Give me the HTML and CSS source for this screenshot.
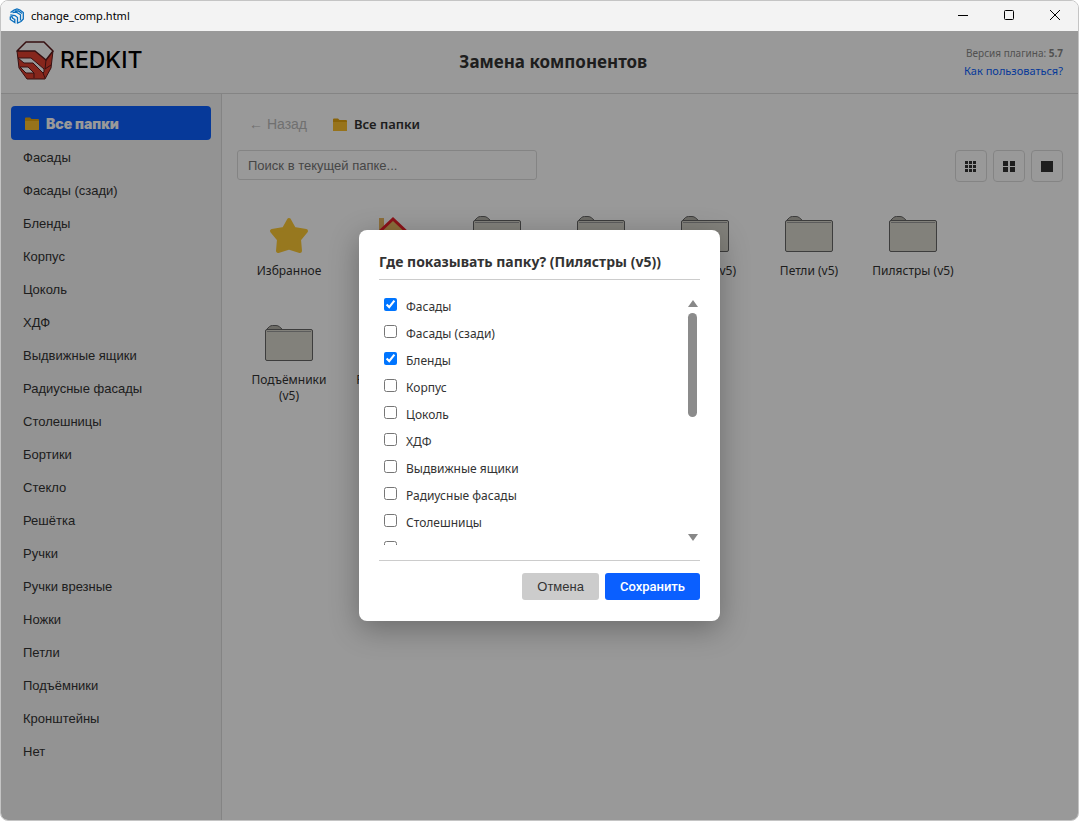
FILE: index.html
```
<!DOCTYPE html>
<html lang="ru">
<head>
  <meta charset="utf-8"/>
  <title>change_comp.html</title>
  <link rel="stylesheet" href="styles.css">
</head>
<body>
  <!-- Shared icons -->
  <svg class="sprite" aria-hidden="true">
    <symbol id="icoFolder" viewBox="0 0 50 38">
      <path d="M2.500 4.500 L5.500 1.500 Q7 .5 8.500 .5 H12 Q14 .5 15.500 1.800 L18.500 4.500Z" fill="#b5b3aa" stroke="#666" />
      <rect x="1.500" y="4.500" width="47" height="31" rx="1.500" fill="#d9d7ce" stroke="#666"/>
      <path d="M3 6.500 H47" stroke="#999"/>
    </symbol>
    <symbol id="icoTab" viewBox="0 0 14 13">
      <path d="M0 1.500 Q0 .5 1 .5 H5 L6.500 2 H13 Q14 2 14 3 V12 Q14 13 13 13 H1 Q0 13 0 12Z" fill="#e5a50f"/>
      <path d="M0 4 H14 V12 Q14 13 13 13 H1 Q0 13 0 12Z" fill="#fcc02e"/>
    </symbol>
  </svg>

  <div class="window">
    <div class="titlebar">
      <svg class="app-icon" viewBox="0 0 16 16" fill="none" stroke="#0b6fbd" stroke-width="1.300">
        <path d="M1.500 4.500 L5 2.200 L8 1 L11 2 L14.300 4.500 V11 L12 13.500 L8.500 15 V9.500 L6 7.500 L1.300 6.800"/>
        <path d="M3.500 4.500 L7 4 L11.500 6.800 V12.500 M6 2.800 L9.500 3 L13 5.500"/>
        <path d="M1.300 8.500 V11.500 L5.800 14.500 V11.500 L3.500 10.200 V9 L1.500 8.500"/>
      </svg>
      <span class="caption">change_comp.html</span>
      <button class="win-btn" aria-label="Свернуть"><svg viewBox="0 0 12 12"><path d="M1 6.500 H11"/></svg></button>
      <button class="win-btn" aria-label="Развернуть"><svg viewBox="0 0 12 12"><rect x="1.500" y="1.500" width="9" height="9" rx="1"/></svg></button>
      <button class="win-btn" aria-label="Закрыть"><svg viewBox="0 0 12 12"><path d="M1 1 L11 11 M11 1 L1 11"/></svg></button>
    </div>

    <div class="app">
      <header class="header">
        <div class="logo">
          <svg viewBox="0 0 38 39" stroke-linejoin="round">
            <path d="M1 10 H19 L30 19 L37 10 L35 27 L29 38 H11 L3 27Z" fill="#e0402f"/>
            <path d="M1 10 L10 1 H28 L37 10 L30 19 L19 10Z" fill="#fff" stroke="#5a1a1c" stroke-width="1.500"/>
            <path d="M2 17 H15 L28 28 V31 L27 32 L17 22 H8Z" fill="#fff" stroke="#5a1a1c"/>
            <path d="M4 26 H12 L18 32 H10Z" fill="#fff" stroke="#5a1a1c"/>
            <path d="M1 10 L3 27 L11 38 H29 L35 27 L37 10 M30 19 L29 28 L35 24 M18 32 V37 M27 32 L29 37" fill="none" stroke="#5a1a1c"/>
          </svg>
          <span>REDKIT</span>
        </div>
        <h1>Замена компонентов</h1>
        <div class="about">
          <div class="version">Версия плагина: <b>5.7</b></div>
          <a href="#">Как пользоваться?</a>
        </div>
      </header>

      <div class="body">
        <nav class="sidebar" id="sidebar">
          <a href="#" class="active"><svg class="tab-icon"><use href="#icoTab"/></svg>Все папки</a>
        </nav>

        <main class="main">
          <div class="crumbs">
            <button class="back" disabled>← Назад</button>
            <span class="crumb"><svg class="tab-icon"><use href="#icoTab"/></svg>Все папки</span>
          </div>
          <div class="tools">
            <input type="text" class="search" aria-label="Поиск" placeholder="Поиск в текущей папке...">
            <div class="views">
              <button aria-label="Мелкие"><svg viewBox="0 0 12 12"><path d="M0 0h3v3h-3zM4 0h3v3h-3zM8 0h3v3h-3zM0 4h3v3h-3zM4 4h3v3h-3zM8 4h3v3h-3zM0 8h3v3h-3zM4 8h3v3h-3zM8 8h3v3h-3z"/></svg></button>
              <button aria-label="Средние"><svg viewBox="0 0 12 12"><path d="M0 0h5v5h-5zM7 0h5v5h-5zM0 6h5v5h-5zM7 6h5v5h-5z"/></svg></button>
              <button aria-label="Крупные"><svg viewBox="0 0 12 12"><path d="M0 0h12v11h-12z"/></svg></button>
            </div>
          </div>
          <div class="grid" id="grid">
            <div class="item">
              <svg viewBox="0 0 50 38"><path d="M25 4 L30 13 L42 15 L35 23.500 L36 35 L25 31.500 L14 35 L15 23.500 L8 15 L20 13Z" fill="#fcc934" stroke="#fcc934" stroke-width="4" stroke-linejoin="round"/></svg>
              <span>Избранное</span>
            </div>
            <div class="item">
              <svg viewBox="0 0 50 38">
                <path d="M11 2 H16 V14 H11Z M12 16 L25 4 L38 16 V37 H12Z" fill="#e8b763"/>
                <path d="M8 19 L25 3 L42 19" fill="none" stroke="#e8202a" stroke-width="3"/>
              </svg>
              <span>Проект</span>
            </div>
          </div>
        </main>
      </div>

      <div class="overlay">
        <form class="modal" role="dialog" aria-labelledby="modalTitle">
          <h2 id="modalTitle">Где показывать папку? (Пилястры (v5))</h2>
          <div class="scroller">
            <div class="checks" id="checks"></div>
            <div class="scrollbar" aria-hidden="true"><i class="up"></i><i class="thumb"></i><i class="down"></i></div>
          </div>
          <div class="actions">
            <button type="button" class="cancel">Отмена</button>
            <button type="button" class="save">Сохранить</button>
          </div>
        </form>
      </div>
    </div>
  </div>

  <script>
    const categories = ["Фасады", "Фасады (сзади)", "Бленды", "Корпус", "Цоколь", "ХДФ",
      "Выдвижные ящики", "Радиусные фасады", "Столешницы", "Бортики", "Стекло", "Решётка",
      "Ручки", "Ручки врезные", "Ножки", "Петли", "Подъёмники", "Кронштейны", "Нет"];
    const checked = ["Фасады", "Бленды"];
    const folders = ["Бленды (v5)", "Корпус (v5)", "Ножки (v5)", "Петли (v5)", "Пилястры (v5)",
      "Подъёмники (v5)", "Решётки (v5)"];

    categories.forEach((name) => {
      document.getElementById("sidebar").insertAdjacentHTML("beforeend",
        `<a href="#">${name}</a>`);
      document.getElementById("checks").insertAdjacentHTML("beforeend",
        `<label><input type="checkbox"${checked.includes(name) ? " checked" : ""}><span>${name}</span></label>`);
    });

    folders.forEach((name) => {
      document.getElementById("grid").insertAdjacentHTML("beforeend",
        `<div class="item"><svg><use href="#icoFolder"/></svg><span>${name}</span></div>`);
    });
  </script>
</body>
</html>
```

FILE: styles.css
```
* {
  box-sizing: border-box;
}
body {
  margin: 0;
  background: #fff;
  color: #333;
  font: 12px/16px "Noto Sans", "Open Sans", sans-serif;
}
button, input {
  font-family: "Liberation Sans", Arial, sans-serif;
}
a {
  text-decoration: none;
}
.sprite {
  display: none;
}

.window {
  display: flex;
  flex-direction: column;
  min-height: 100vh;
  border: 1px solid #c4c4c4;
  border-radius: 8px;
  overflow: hidden;
}
.titlebar {
  display: flex;
  align-items: center;
  height: 30px;
  padding-left: 8px;
  background: #f3f3f3;
  color: #000;
  font-size: 11px;
}
.app-icon {
  width: 16px;
  height: 16px;
}
.caption {
  flex: 1;
  margin-left: 6px;
}
.win-btn {
  width: 46px;
  height: 30px;
  padding: 0;
  border: none;
  background: none;
}
.win-btn svg {
  width: 12px;
  height: 12px;
  fill: none;
  stroke: #000;
}

.app {
  position: relative;
  flex: 1;
  display: flex;
  flex-direction: column;
}
.header {
  display: flex;
  justify-content: space-between;
  align-items: center;
  height: 63px;
  padding: 0 15px;
  border-bottom: 1px solid #ddd;
}
.logo {
  display: flex;
  align-items: center;
  gap: 6px;
  padding-bottom: 4px;
  color: #000;
  font: 500 23px/38px Inter, sans-serif;
}
.logo svg {
  width: 38px;
  height: 39px;
}
.header h1 {
  margin: 0;
  font-size: 17px;
  line-height: 26px;
}
.about {
  color: #888;
  font-size: 11px;
  line-height: 18px;
  text-align: right;
}
.version {
  font-size: 10px;
}
.about a {
  color: #0a5fff;
}

.body {
  flex: 1;
  display: flex;
}
.sidebar {
  width: 221px;
  padding: 12px 10px;
  border-right: 1px solid #ddd;
  background: #f5f5f5;
  font-family: "Liberation Sans", Arial, sans-serif;
  font-size: 13px;
}
.sidebar a {
  display: block;
  padding: 0 12px;
  color: #333;
  line-height: 33px;
}
.sidebar .active {
  display: flex;
  align-items: center;
  height: 34px;
  margin-bottom: 1px;
  padding: 0 14px;
  border-radius: 4px;
  background: #0a5fff;
  color: #fff;
  font: 900 14px Inter, sans-serif;
}
.tab-icon {
  width: 14px;
  height: 13px;
  margin-right: 7px;
}

.main {
  flex: 1;
  padding: 15px;
}
.crumbs {
  display: flex;
  align-items: center;
  gap: 26px;
  height: 30px;
}
.back {
  padding: 0 0 0 12px;
  border: none;
  background: none;
  color: #bbb;
  font-size: 14px;
}
.crumb {
  display: flex;
  align-items: center;
  font-size: 13px;
  font-weight: 600;
}
.tools {
  display: flex;
  justify-content: space-between;
  margin-top: 11px;
}
.search {
  width: 300px;
  height: 30px;
  padding: 0 10px;
  border: 1px solid #ddd;
  border-radius: 3px;
  font-size: 13px;
}
.views {
  display: flex;
  gap: 6px;
}
.views button {
  width: 32px;
  height: 32px;
  padding: 0;
  border: 1px solid #ddd;
  border-radius: 4px;
  background: #fff;
}
.views svg {
  width: 12px;
  height: 12px;
  fill: #333;
  vertical-align: middle;
}

.grid {
  display: grid;
  grid-template-columns: repeat(auto-fill, 104px);
  grid-auto-rows: 109px;
  margin-top: 34px;
}
.item {
  display: flex;
  flex-direction: column;
  align-items: center;
  gap: 9px;
  padding: 0 8px;
  text-align: center;
}
.item svg {
  flex: none;
  width: 50px;
  height: 38px;
}

.overlay {
  position: absolute;
  inset: 0;
  display: flex;
  align-items: center;
  justify-content: center;
  background: rgba(0, 0, 0, .4);
}
.modal {
  width: 361px;
  padding: 20px 20px 21px;
  border-radius: 8px;
  background: #fff;
  box-shadow: 0 8px 30px rgba(0, 0, 0, .3);
}
.modal h2 {
  margin: 0 0 15px;
  padding-bottom: 5px;
  border-bottom: 1px solid #ccc;
  font-size: 14px;
  line-height: 24px;
}
.scroller {
  display: flex;
  height: 250px;
}
.checks {
  flex: 1;
  overflow-y: auto;
  scrollbar-width: none;
}
.checks label {
  display: flex;
  align-items: flex-start;
  height: 27px;
  padding: 3px 5px;
  line-height: 18px;
}
.checks input {
  width: 13px;
  height: 13px;
  margin: 0 9px 0 0;
}
.scrollbar {
  display: flex;
  flex-direction: column;
  align-items: center;
  width: 15px;
  padding: 5px 0 4px;
}
.up, .down {
  border: 5px solid transparent;
}
.up {
  border-top: none;
  border-bottom: 7px solid #888;
}
.down {
  margin-top: auto;
  border-bottom: none;
  border-top: 7px solid #888;
}
.thumb {
  width: 9px;
  height: 104px;
  margin-top: 6px;
  border-radius: 5px;
  background: #8b8b8b;
}
.actions {
  display: flex;
  justify-content: flex-end;
  gap: 6px;
  margin-top: 15px;
  padding-top: 12px;
  border-top: 1px solid #ccc;
}
.actions button {
  height: 27px;
  padding: 0 15px;
  border: none;
  border-radius: 3px;
  font-size: 13px;
}
.actions .cancel {
  background: #ccc;
  color: #333;
}
.actions .save {
  background: #0a5fff;
  color: #fff;
  font-family: Roboto, sans-serif;
  font-weight: 500;
}
```
